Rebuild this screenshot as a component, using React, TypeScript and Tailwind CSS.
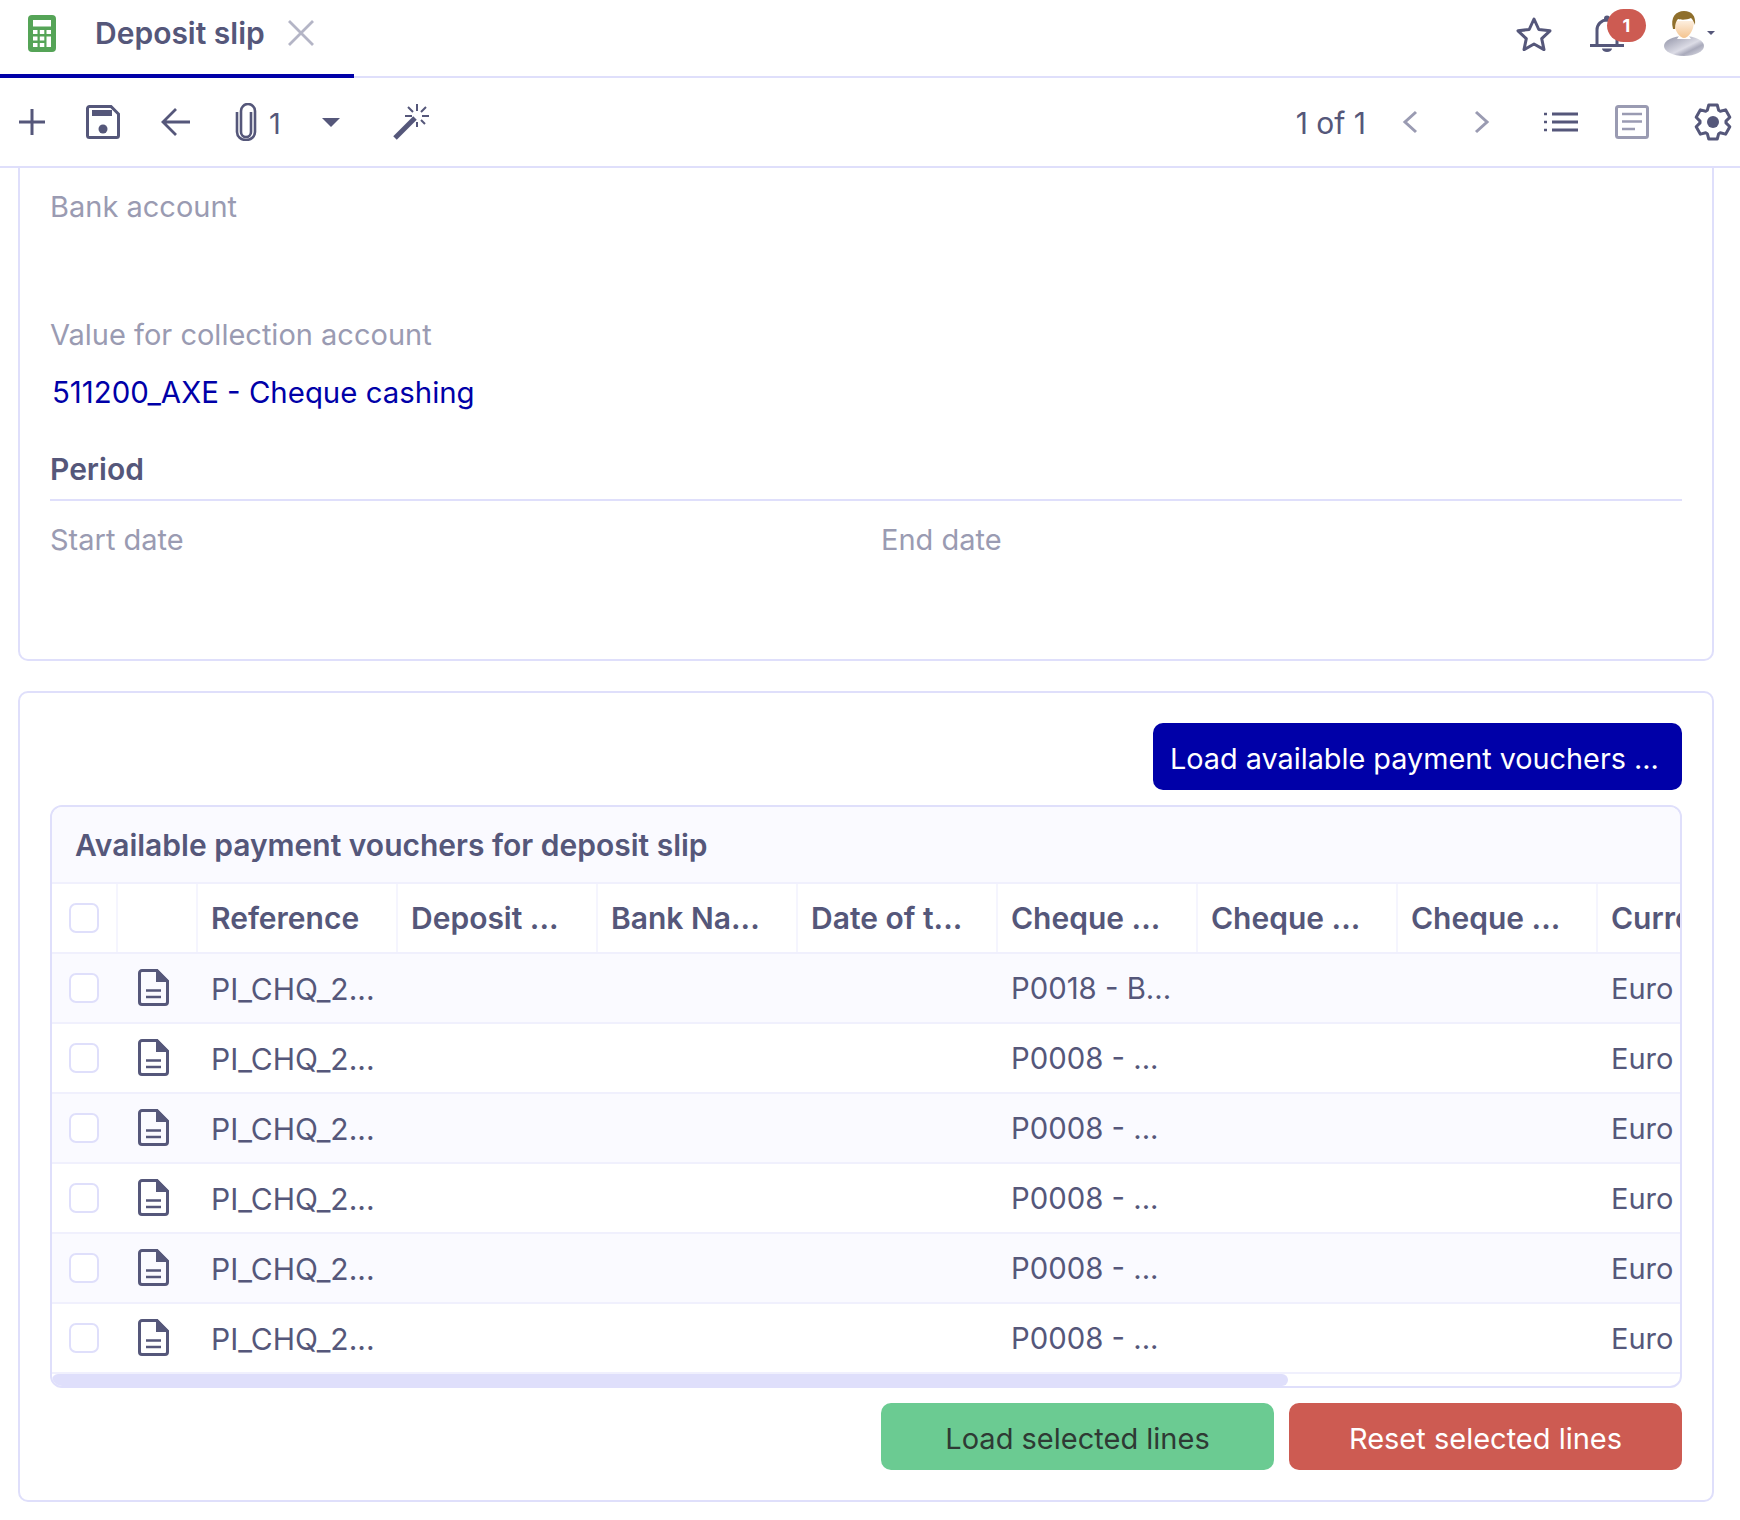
import { FC, ReactNode } from "react";

const headers = ["Reference", "Deposit ...", "Bank Na...", "Date of t...", "Cheque ...", "Cheque ...", "Cheque ...", "Currency"];

const rows = [
  { ref: "PI_CHQ_2...", cheque: "P0018 - B..." },
  { ref: "PI_CHQ_2...", cheque: "P0008 - ..." },
  { ref: "PI_CHQ_2...", cheque: "P0008 - ..." },
  { ref: "PI_CHQ_2...", cheque: "P0008 - ..." },
  { ref: "PI_CHQ_2...", cheque: "P0008 - ..." },
  { ref: "PI_CHQ_2...", cheque: "P0008 - ..." },
];

const Ico: FC<{ w: number; h: number; children: ReactNode; className?: string }> = ({ w, h, children, className }) => (
  <svg width={w} height={h} viewBox={`0 0 ${w} ${h}`} fill="none" stroke="#55577a" className={`shrink-0 ${className ?? ""}`}>
    {children}
  </svg>
);

// six toothed gear, points worked out around the centre
const gearPath = (() => {
  const pts: string[] = [];
  const polar = (r: number, deg: number) => {
    const a = (deg * Math.PI) / 180;
    return `${(19 + r * Math.sin(a)).toFixed(2)} ${(19 - r * Math.cos(a)).toFixed(2)}`;
  };
  for (let i = 0; i < 6; i++) {
    const c = i * 60;
    pts.push(polar(13, c - 26), polar(17.5, c - 14), polar(17.5, c + 14), polar(13, c + 26));
  }
  return `M${pts.join("L")}z`;
})();

const CalcIcon = () => (
  <svg width="28" height="37" viewBox="0 0 28 37" className="shrink-0">
    <rect width="28" height="37" rx="4" fill="#55a457" />
    <rect x="5" y="5" width="18" height="6.500" fill="#fff" />
    <path d="M5 15h4.500v4H5zM11.800 15h4.500v4h-4.500zM18.500 15H23v4h-4.500zM5 21.500h4.500v4H5zM11.800 21.500h4.500v4h-4.500zM5 28h4.500v4H5zM11.800 28h4.500v4h-4.500zM18.500 21.500H23V32h-4.500z" fill="#fff" />
  </svg>
);

const DocIcon = () => (
  <Ico w={31} h={37} className="-mt-[2px]">
    <path d="M4 1.500h15l10.500 10.500v21a2.500 2.500 0 0 1-2.500 2.500H4A2.500 2.500 0 0 1 1.500 33V4A2.500 2.500 0 0 1 4 1.500z" strokeWidth="3" />
    <path d="M19 1.500l10.500 10.500H19z" fill="#55577a" strokeWidth="2" />
    <path d="M8 21.500h15M8 28h15" strokeWidth="2.600" />
  </Ico>
);

const Checkbox = () => <div className="h-[30px] w-[30px] rounded-[7px] border-2 border-[#dfdffb] bg-white" />;

const Field: FC<{ label: string; className?: string; children?: ReactNode }> = ({ label, className, children }) => (
  <div className={className}>
    <div className="text-[#9a9bb2]">{label}</div>
    {children}
  </div>
);

const App: FC = () => {
  return (
    <div className="h-[1520px] w-[1740px] overflow-hidden bg-white text-[29px] leading-[38px] text-[#55577a] [font-family:Inter,'Liberation_Sans',sans-serif]">
      {/* Tab bar */}
      <header className="flex h-[78px] items-start justify-between border-b-2 border-[#dfdffb]">
        <div className="flex h-[78px] w-[354px] items-center border-b-4 border-[#0000a8] pb-[8px] pl-[28px]">
          <CalcIcon />
          <span className="ml-[39px] text-[30px] font-semibold">Deposit slip</span>
          <Ico w={28} h={28} className="ml-[22px]">
            <path d="M2 2l24 24M26 2L2 26" stroke="#b4b5c6" strokeWidth="2.800" />
          </Ico>
        </div>
        <div className="flex h-[76px] items-center pb-[10px] pr-[25px]">
          <Ico w={36} h={35}>
            <path d="M18 3l4.800 10.500 11.200 1.300-8.300 7.800 2.300 11-10-5.600-10 5.600 2.300-11L2 14.800l11.200-1.300z" strokeWidth="3" strokeLinejoin="round" />
          </Ico>
          <div className="relative ml-[38px] h-[48px] w-[56px]">
            <Ico w={34} h={37} className="absolute left-0 top-[6px]">
              <path d="M7 29V15a10 10 0 0 1 20 0v14M0 30.500h34" strokeWidth="3" />
              <circle cx="17" cy="3.500" r="3" fill="#55577a" stroke="none" />
              <path d="M12 33.500h10a5 3.500 0 0 1-10 0z" fill="#55577a" stroke="none" />
            </Ico>
            <div className="absolute left-[17px] top-0 flex h-[33px] w-[39px] items-center justify-center rounded-full bg-[#cd5b52] text-[18px] font-bold text-white">1</div>
          </div>
          <svg width="40" height="45" viewBox="0 0 40 45" className="ml-[18px] shrink-0">
            <defs>
              <linearGradient id="body" x1="0" y1="0" x2="1" y2="1">
                <stop offset="0" stopColor="#8d8fa3" />
                <stop offset="0.55" stopColor="#dcdce6" />
                <stop offset="0.7" stopColor="#a9aabb" />
                <stop offset="1" stopColor="#e5e5ec" />
              </linearGradient>
              <linearGradient id="face" x1="0" y1="0" x2="0" y2="1">
                <stop offset="0" stopColor="#fdeede" />
                <stop offset="1" stopColor="#f4c48f" />
              </linearGradient>
            </defs>
            <ellipse cx="20" cy="35" rx="20" ry="10" fill="url(#body)" />
            <path d="M15 25h10l2 3h-14z" fill="#fff" />
            <path d="M10 10c0 10 6 17 10 17s10-7 10-17z" fill="url(#face)" />
            <path d="M9 18C6 6 12 0 20 0c8 0 12 5 11 14-1-3-2-5-4-7-4 2-10 2-13 1-2 2-3 5-3 10z" fill="#8f6f2c" />
          </svg>
          <div className="ml-[3px] h-0 w-0 border-x-[4px] border-t-[4px] border-x-transparent border-t-[#55577a]" />
        </div>
      </header>

      {/* Toolbar */}
      <div className="flex h-[90px] items-center justify-between border-b-2 border-[#dfdffb]">
        <div className="flex items-center pl-[18px]">
          <Ico w={28} h={28}>
            <path d="M14 1v26M1 14h26" strokeWidth="3" />
          </Ico>
          <Ico w={34} h={34} className="ml-[40px]">
            <path d="M3.500 1.500H25l7.500 7.500v21.500a2 2 0 0 1-2 2h-27a2 2 0 0 1-2-2v-27a2 2 0 0 1 2-2z" strokeWidth="3" />
            <rect x="6" y="5" width="20" height="6" fill="#55577a" stroke="none" />
            <circle cx="17" cy="24" r="4.500" fill="#55577a" stroke="none" />
          </Ico>
          <Ico w={30} h={30} className="ml-[40px]">
            <path d="M30 15H3M16 2L3 15l13 13" strokeWidth="2.800" />
          </Ico>
          <Ico w={24} h={38} className="ml-[44px]">
            <path d="M17 9v20a5 5 0 0 1-10 0V8a7 7 0 0 1 14 0v21a9 8 0 0 1-18 0V9" strokeWidth="2.600" />
          </Ico>
          <span className="ml-[11px] mt-[4px]">1</span>
          <div className="ml-[41px] h-0 w-0 border-x-[9px] border-t-[9px] border-x-transparent border-t-[#55577a]" />
          <Ico w={36} h={36} className="ml-[53px]">
            <path d="M2 34l20-20" strokeWidth="5" />
            <path d="M24 0v7M24 18v5M12 12h7M29 12h7M15 3l5 5M28 16l4 4M33 3l-5 5" strokeWidth="2" />
          </Ico>
        </div>
        <div className="flex items-center pr-[8px]">
          <span className="pt-[1px] text-[30px]">1 of 1</span>
          <Ico w={16} h={24} className="ml-[36px]">
            <path d="M14 2L3 12l11 10" stroke="#9a9bb2" strokeWidth="3" />
          </Ico>
          <Ico w={16} h={24} className="ml-[56px]">
            <path d="M2 2l11 10L2 22" stroke="#9a9bb2" strokeWidth="3" />
          </Ico>
          <Ico w={34} h={20} className="ml-[54px]">
            <path d="M8 2h26M8 10h26M8 18h26" strokeWidth="3" />
            <path d="M0 2h3M0 10h3M0 18h3" strokeWidth="2.500" />
          </Ico>
          <Ico w={34} h={34} className="ml-[37px]">
            <rect x="1.500" y="1.500" width="31" height="31" rx="2" stroke="#9a9bb2" strokeWidth="3" />
            <path d="M7 9h20M7 16.500h20M7 24h13" stroke="#9a9bb2" strokeWidth="2.500" />
          </Ico>
          <Ico w={38} h={38} className="ml-[45px]">
            <path d={gearPath} strokeWidth="3" strokeLinejoin="round" />
            <circle cx="19" cy="19" r="6" fill="#55577a" stroke="none" />
          </Ico>
        </div>
      </div>

      {/* Header form */}
      <section className="ml-[18px] h-[493px] w-[1696px] rounded-b-[10px] border-x-2 border-b-2 border-[#dfdffb] pl-[30px] pr-[30px] pt-[20px]">
        <Field label="Bank account" className="h-[128px]" />
        <Field label="Value for collection account" className="h-[134px]">
          <div className="ml-[2px] mt-[20px] text-[29.4px] text-[#0000a8]">511200_AXE - Cheque cashing</div>
        </Field>
        <div className="border-b-2 border-[#dfdffb] pb-[11px] text-[30px] font-semibold">Period</div>
        <div className="mt-[20px] flex">
          <Field label="Start date" className="w-[831px]" />
          <Field label="End date" />
        </div>
      </section>

      {/* Vouchers */}
      <section className="ml-[18px] mt-[30px] h-[811px] w-[1696px] rounded-[10px] border-2 border-[#dfdffb] pl-[30px] pr-[30px] pt-[30px]">
        <div className="flex justify-end">
          <button className="flex h-[67px] w-[529px] items-center rounded-[10px] bg-[#0000a8] pl-[17px] pt-[4px] text-[28.800px] text-white">Load available payment vouchers ...</button>
        </div>

        <div className="mt-[15px] h-[583px] overflow-hidden rounded-[12px] border-2 border-[#dfdffb]">
          <div className="flex h-[77px] items-center border-b-2 border-[#f0f0fd] bg-[#fafaff] pl-[23px] text-[30px] font-semibold">Available payment vouchers for deposit slip</div>
          <div className="flex h-[70px] overflow-hidden border-b-2 border-[#f0f0fd] text-[30px] font-semibold">
            <div className="flex w-[66px] shrink-0 items-center border-r-2 border-[#f5f5fe] pl-[17px]">
              <Checkbox />
            </div>
            <div className="w-[80px] shrink-0 border-r-2 border-[#f5f5fe]" />
            {headers.map((h, i) => (
              <div key={i} className="w-[200px] shrink-0 overflow-hidden whitespace-nowrap border-r-2 border-[#f5f5fe] pl-[13px] pt-[15px]">
                {h}
              </div>
            ))}
          </div>
          {rows.map((r, i) => (
            <div key={i} className={`flex h-[70px] items-center border-b-2 border-[#f0f0fd] ${i % 2 === 0 ? "bg-[#fafaff]" : "bg-white"}`}>
              <div className="w-[65px] shrink-0 pl-[17px]">
                <Checkbox />
              </div>
              <div className="w-[80px] shrink-0 pl-[21px]">
                <DocIcon />
              </div>
              <div className="w-[800px] shrink-0 pl-[14px] pt-[2px] text-[30px]">{r.ref}</div>
              <div className="w-[600px] shrink-0 pl-[14px] pt-[2px] text-[29.300px]">{r.cheque}</div>
              <div className="pl-[14px] pt-[2px]">Euro</div>
            </div>
          ))}
          <div className="h-[13px]">
            <div className="h-[12px] w-[1236px] rounded-full bg-[#dfdffb]" />
          </div>
        </div>

        <div className="mt-[15px] flex justify-end gap-[15px]">
          <button className="h-[67px] w-[393px] rounded-[10px] bg-[#6bcb92] pt-[4px] text-[#2e3a34]">Load selected lines</button>
          <button className="h-[67px] w-[393px] rounded-[10px] bg-[#cd5b52] pt-[4px] text-white">Reset selected lines</button>
        </div>
      </section>
    </div>
  );
};

export default App;
